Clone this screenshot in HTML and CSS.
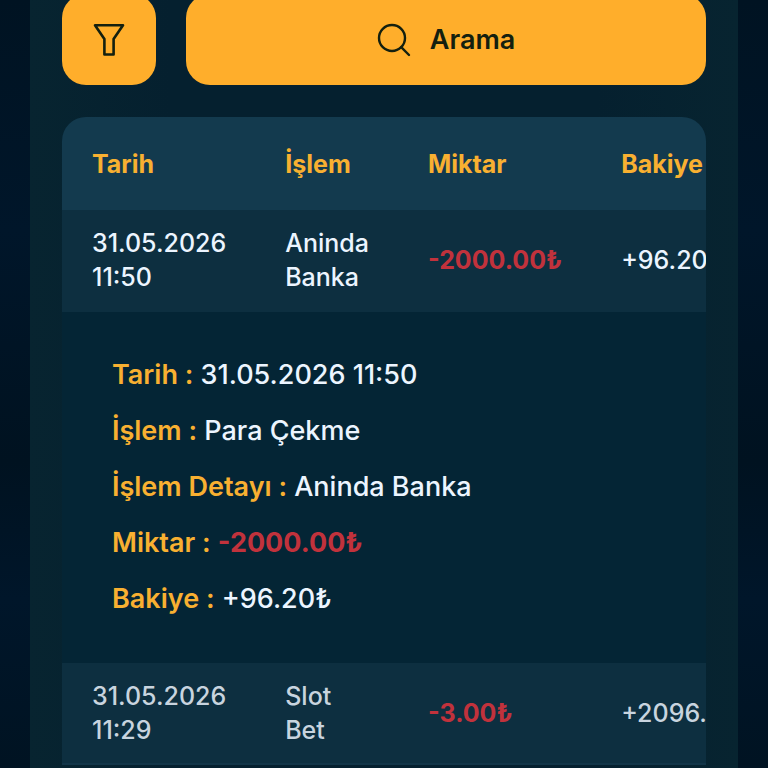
FILE: index.html
```html
<!DOCTYPE html>
<html lang="tr">
<head>
<meta charset="utf-8">
<meta name="viewport" content="width=device-width, initial-scale=1">
<title>İşlem Geçmişi</title>
<link rel="stylesheet" href="styles.css">
</head>
<body>
<main class="panel">
  <div class="toolbar">
    <button class="btn btn-filter" type="button" aria-label="Filtre">
      <svg width="32" height="34" viewBox="0 0 32 34" fill="none" stroke="currentColor" stroke-width="2.6" stroke-linejoin="round"><path d="M2 2.2H30L20.6 16V31.5H11.4V16Z"/></svg>
    </button>
    <button class="btn btn-search" type="button">
      <svg width="34" height="34" viewBox="0 0 34 34" fill="none" stroke="currentColor" stroke-width="2.4" stroke-linecap="round"><circle cx="15" cy="15" r="13"/><path d="M24.2 24.2L32 32"/></svg>
      <span>Arama</span>
    </button>
  </div>
  <div class="table-scroll">
    <table class="history">
      <thead>
        <tr><th scope="col">Tarih</th><th scope="col">İşlem</th><th scope="col">Miktar</th><th scope="col">Bakiye</th></tr>
      </thead>
      <tbody>
        <tr class="entry open">
          <td>31.05.2026 11:50</td><td>Aninda Banka</td><td class="amount negative">-2000.00₺</td><td class="amount">+96.20₺</td>
        </tr>
        <tr class="details">
          <td colspan="4">
            <dl class="detail-list">
              <div><dt>Tarih :</dt> <dd>31.05.2026 11:50</dd></div>
              <div><dt>İşlem :</dt> <dd>Para Çekme</dd></div>
              <div><dt>İşlem Detayı :</dt> <dd>Aninda Banka</dd></div>
              <div><dt>Miktar :</dt> <dd class="negative">-2000.00₺</dd></div>
              <div><dt>Bakiye :</dt> <dd>+96.20₺</dd></div>
            </dl>
          </td>
        </tr>
        <tr class="entry">
          <td>31.05.2026 11:29</td><td>Slot Bet</td><td class="amount negative">-3.00₺</td><td class="amount">+2096.20₺</td>
        </tr>
      </tbody>
    </table>
  </div>
</main>
</body>
</html>
```
FILE: styles.css
```css
* { box-sizing: border-box; }

html {
  height: 100%;
  overflow: hidden;
  background: #001326;
}

body {
  min-height: 100%;
  margin: 0;
  padding: 0 30px;
  display: flex;
  font-family: Inter, "Noto Sans", sans-serif;
  background: linear-gradient(#001322, #00162a 30%, #001220 60%, #00162a 78%, #001322);
}

.panel {
  flex: 1;
  min-width: 0;
  margin-top: -6px;
  padding: 0 32px;
  background: linear-gradient(90deg, #072430, #05202f 20%, #05202f 80%, #072430);
}

.toolbar {
  display: flex;
  gap: 30px;
  margin-bottom: 32px;
}

.btn {
  display: flex;
  align-items: center;
  justify-content: center;
  height: 91px;
  padding: 0;
  border: 0;
  border-radius: 24px;
  background: #ffae2b;
  color: #14200f;
  font: 600 27px/36px Inter, "Noto Sans", sans-serif;
}

.btn-filter { width: 94px; }
.btn-search { flex: 1; gap: 19px; }

.table-scroll {
  overflow: auto hidden;
  scrollbar-width: none;
  border-radius: 24px 24px 0 0;
}

.history {
  width: 100%;
  border-spacing: 0;
  text-align: left;
  font-size: 25px;
  font-weight: 500;
  line-height: 34px;
  color: #c8d4df;
}

.history th {
  height: 93px;
  padding: 0 29px 0 30px;
  background: #133a4e;
  color: #f8b031;
  font-weight: 700;
}

.entry td {
  height: 102px;
  padding: 16px 29px 16px 30px;
  background: #0d2f40;
  border-bottom: 2px solid #123548;
}

.open td {
  color: #ecf5ff;
  border-bottom-color: #0d2f40;
}

.amount { white-space: nowrap; }

.history .negative { color: #c1323c; font-weight: 700; }

.details td {
  padding: 45px 50px 46px;
  background: #042535;
}

.detail-list {
  display: grid;
  gap: 20px;
  margin: 0;
  font-size: 27px;
  line-height: 36px;
}

.detail-list dt, .detail-list dd {
  display: inline;
  margin: 0;
}

.detail-list dt { color: #f8b031; font-weight: 600; }
.detail-list dd { color: #ecf5ff; }
```
